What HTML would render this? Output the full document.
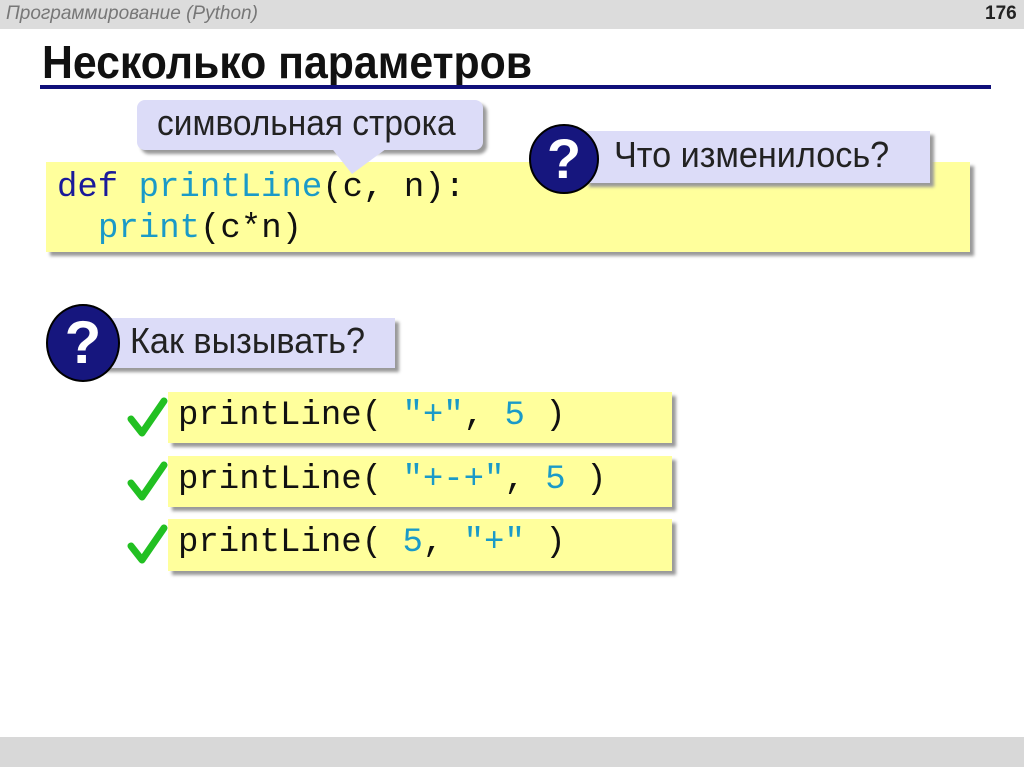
<!DOCTYPE html>
<html><head><meta charset="utf-8"><style>
body{margin:0;width:1024px;height:767px;background:#fff;position:relative;overflow:hidden;font-family:"Liberation Sans",sans-serif}
.abs{position:absolute}
.hdr{left:0;top:0;width:1024px;height:29px;background:#dcdcdc}
.ftr{left:0;top:737px;width:1024px;height:30px;background:#d8d8d8}
.mono{font-family:"Liberation Mono",monospace;font-size:34px;white-space:pre;color:#111}
.y{background:#ffff9c;box-shadow:4px 4px 3px #999}
.lav{background:#dcdcf8;box-shadow:4px 4px 3px #999}
.q{border-radius:50%;background:#16167e;border:2px solid #000;color:#fff;font-weight:bold;text-align:center}
.b{color:#1a1a9a}.c{color:#1a9ac8}
</style></head><body>
<div class="abs hdr"></div>
<div class="abs" style="left:6px;top:3px;font-size:19px;font-style:italic;color:#777">Программирование (Python)</div>
<div class="abs" style="left:985px;top:3px;font-size:19px;font-weight:bold;color:#222">176</div>
<div class="abs" style="left:42px;top:35px;font-size:46px;font-weight:bold;color:#111;transform:scaleX(0.93);transform-origin:left">Несколько параметров</div>
<div class="abs" style="left:40px;top:85px;width:951px;height:4px;background:#10107a"></div>

<div class="abs y" style="left:46px;top:162px;width:924px;height:90px"></div>
<div class="abs mono" style="left:57px;top:169px"><span class="b">def</span> <span class="c">printLine</span>(c, n):</div>
<div class="abs mono" style="left:98px;top:210px"><span class="c">print</span>(c*n)</div>

<div class="abs lav" style="left:137px;top:100px;width:346px;height:50px;border-radius:8px"></div>
<svg class="abs" style="left:330px;top:146px" width="80" height="32"><polygon points="0,0 60,0 22,28" fill="#dcdcf8"/></svg>
<div class="abs" style="left:157px;top:102px;font-size:36px;color:#222;transform:scaleX(0.93);transform-origin:left">символьная строка</div>

<div class="abs lav" style="left:585px;top:131px;width:345px;height:52px"></div>
<div class="abs" style="left:614px;top:134px;font-size:36px;color:#222;transform:scaleX(0.95);transform-origin:left">Что изменилось?</div>
<div class="abs q" style="left:529px;top:124px;width:66px;height:66px;font-size:56px;line-height:66px">?</div>

<div class="abs lav" style="left:100px;top:318px;width:295px;height:50px"></div>
<div class="abs" style="left:130px;top:320px;font-size:36px;color:#222;transform:scaleX(0.95);transform-origin:left">Как вызывать?</div>
<div class="abs q" style="left:46px;top:304px;width:70px;height:74px;font-size:60px;line-height:74px">?</div>

<div class="abs y" style="left:168px;top:392px;width:504px;height:51px"></div>
<div class="abs mono" style="left:178px;top:397px">printLine( <span class="c">"+"</span>, <span class="c">5</span> )</div>
<div class="abs y" style="left:168px;top:456px;width:504px;height:51px"></div>
<div class="abs mono" style="left:178px;top:461px">printLine( <span class="c">"+-+"</span>, <span class="c">5</span> )</div>
<div class="abs y" style="left:168px;top:519px;width:504px;height:52px"></div>
<div class="abs mono" style="left:178px;top:524px">printLine( <span class="c">5</span>, <span class="c">"+"</span> )</div>

<svg class="abs" style="left:126px;top:395px" width="44" height="190">
<g fill="none" stroke="#22c022" stroke-width="7" stroke-linecap="round" stroke-linejoin="round">
<path d="M5,24 L16,38 L38,6"/><path d="M5,88 L16,102 L38,70"/><path d="M5,151 L16,165 L38,133"/></g></svg>

<div class="abs ftr"></div>
</body></html>
